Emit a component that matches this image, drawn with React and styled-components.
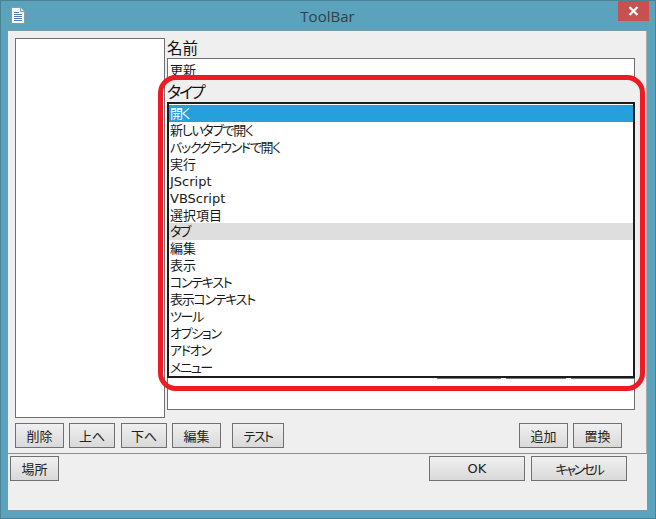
import React from 'react';
import styled, { createGlobalStyle } from 'styled-components';

const GlobalStyle = createGlobalStyle`
    html, body {
        margin: 0;
        padding: 0;
        overflow: hidden;
    }
    body {
        font-family: "DejaVu Sans", "Noto Sans CJK JP", sans-serif;
        font-feature-settings: "palt";
        color: #1a1a1a;
    }
`;

const menuItems = [
    '開く', '新しいタブで開く', 'バックグラウンドで開く', '実行', 'JScript', 'VBScript',
    '選択項目', 'タブ', '編集', '表示', 'コンテキスト', '表示コンテキスト', 'ツール',
    'オプション', 'アドオン', 'メニュー',
];

const hasKana = (text) => /[\u3040-\u30ff]/.test(text);

function DocIcon() {
    return (
        <svg width="14" height="17" viewBox="0 0 14 17">
            <path d="M0.5 0.5H9.5L13.5 4.5V16.5H0.5Z" fill="#fbfcfe" stroke="#8f98a3" />
            <path d="M9.5 0.5V4.5H13.5" fill="#dfe5ec" stroke="#8f98a3" />
            <path d="M3 5.5H8M3 7.5H11M3 9.5H11M3 11.5H11M3 13.5H11" stroke="#4f7fc0" />
        </svg>
    );
}

export default function App() {
    return (
        <Frame>
            <GlobalStyle />
            <TitleBar>
                <TitleIcon><DocIcon /></TitleIcon>
                <Title>ToolBar</Title>
                <CloseButton>
                    <svg width="11" height="10" viewBox="0 0 11 10">
                        <path d="M1.5 1L9.5 9M9.5 1L1.5 9" stroke="#fff" strokeWidth="2.2" />
                    </svg>
                </CloseButton>
            </TitleBar>
            <Client>
                <Panel>
                    <Body>
                        <ButtonList />
                        <Details>
                            <FieldLabel>名前</FieldLabel>
                            <NameInput>更新</NameInput>
                            <FieldLabel $kana>タイプ</FieldLabel>
                            <TypeBox>
                                <HiddenButtons>
                                    <HiddenButton $w={64} />
                                    <HiddenButton $w={60} />
                                    <HiddenButton $w={63} />
                                </HiddenButtons>
                                <Dropdown>
                                    {menuItems.map((item, i) => (
                                        <MenuRow key={item} $selected={i === 0} $hover={i === 7} $kana={hasKana(item)}>{item}</MenuRow>
                                    ))}
                                </Dropdown>
                            </TypeBox>
                        </Details>
                    </Body>
                    <ActionRow>
                        <Button $w={49}>削除</Button>
                        <Button $w={46}>上へ</Button>
                        <Button $w={46} $ml={1}>下へ</Button>
                        <Button $w={49}>編集</Button>
                        <Button $w={52} $ml={6} $spacing={-1.5}>テスト</Button>
                        <Spacer />
                        <Button $w={49}>追加</Button>
                        <Button $w={49}>置換</Button>
                    </ActionRow>
                </Panel>
                <FooterRow>
                    <Button $w={49}>場所</Button>
                    <Spacer />
                    <Button $w={96}>OK</Button>
                    <Button $w={96} $spacing={-2.4}>キャンセル</Button>
                </FooterRow>
            </Client>
            <Highlight />
        </Frame>
    );
}

const Frame = styled.div`
    position: relative;
    box-sizing: border-box;
    width: 656px;
    height: 519px;
    display: flex;
    flex-direction: column;
    padding: 0 7px 7px 6px;
    background: #5ba2bc;
    border: 1px solid #4a8296;
    overflow: hidden;
`;

const TitleBar = styled.div`
    position: relative;
    flex: none;
    height: 29px;
    display: flex;
    align-items: center;
    justify-content: center;
`;

const TitleIcon = styled.div`
    position: absolute;
    left: 4px;
    top: 6px;
    line-height: 0;
`;

const Title = styled.div`
    font-family: "Open Sans", sans-serif;
    font-size: 15px;
    color: #2f4248;
`;

const CloseButton = styled.div`
    position: absolute;
    right: -1px;
    top: 0;
    width: 31px;
    height: 20px;
    display: flex;
    align-items: center;
    justify-content: center;
    background: #c75050;
`;

const Client = styled.div`
    flex: 1;
    display: flex;
    flex-direction: column;
    background: #efefef;
    border: 1px solid #7f98a3;
`;

const Panel = styled.div`
    box-sizing: border-box;
    height: 423px;
    display: flex;
    flex-direction: column;
    gap: 5px;
    padding: 7px 0 5px 7px;
    border-bottom: 1px solid #8a8d90;
    border-right: 1px solid #a9acae;
`;

const Body = styled.div`
    flex: 1;
    min-height: 0;
    display: flex;
    gap: 2px;
`;

const ButtonList = styled.div`
    box-sizing: border-box;
    width: 150px;
    background: #fff;
    border: 1px solid #6f6f6f;
`;

const Details = styled.div`
    width: 468px;
    height: 372px;
    display: flex;
    flex-direction: column;
`;

const FieldLabel = styled.div`
    height: ${(p) => (p.$kana ? '22px' : '20px')};
    font-size: ${(p) => (p.$kana ? '16px' : '15.5px')};
    line-height: ${(p) => (p.$kana ? '25px' : '22px')};
    letter-spacing: ${(p) => (p.$kana ? '-2px' : '0')};
    color: #111;
    white-space: nowrap;
`;

const NameInput = styled.div`
    box-sizing: border-box;
    height: 22px;
    padding-left: 2px;
    font-size: 13px;
    line-height: 23px;
    background: #fff;
    border: 1px solid #6f6f6f;
`;

const TypeBox = styled.div`
    position: relative;
    box-sizing: border-box;
    flex: 1;
    background: #fff;
    border: 1px solid #6f6f6f;
`;

const HiddenButtons = styled.div`
    display: flex;
    justify-content: flex-end;
    gap: 5px;
    padding-top: 251px;
`;

const HiddenButton = styled.div`
    box-sizing: border-box;
    width: ${(p) => p.$w}px;
    height: 25px;
    background: #e6e6e6;
    border: 1px solid #7a7a7a;
`;

const Dropdown = styled.div`
    position: absolute;
    left: -1px;
    top: -1px;
    box-sizing: border-box;
    width: 468px;
    height: 276px;
    padding: 1px 0;
    background: #fff;
    border: 2px solid #1c1c1c;
    overflow: hidden;
`;

const MenuRow = styled.div`
    height: 16.93px;
    padding-left: 1px;
    font-size: 13px;
    line-height: 17px;
    white-space: nowrap;
    letter-spacing: ${(p) => (p.$kana ? '-1.3px' : '0')};
    color: ${(p) => (p.$selected ? '#fff' : '#1a1a1a')};
    background: ${(p) => (p.$selected ? '#26a0da' : p.$hover ? '#dedede' : 'transparent')};
`;

const ActionRow = styled.div`
    flex: none;
    display: flex;
    gap: 5px;
    padding-right: 24px;
`;

const FooterRow = styled.div`
    display: flex;
    gap: 6px;
    padding: 2px 20px 0 2px;
`;

const Spacer = styled.div`
    flex: 1;
`;

const Button = styled.div`
    box-sizing: border-box;
    flex: none;
    width: ${(p) => p.$w}px;
    height: 25px;
    margin-left: ${(p) => p.$ml || 0}px;
    display: flex;
    align-items: center;
    justify-content: center;
    font-size: 13px;
    letter-spacing: ${(p) => p.$spacing || 0}px;
    color: #222;
    white-space: nowrap;
    background: linear-gradient(#f0f0f0, #d9d9d9);
    border: 1px solid #707070;
`;

const Highlight = styled.div`
    position: absolute;
    left: 157px;
    top: 74px;
    box-sizing: border-box;
    width: 487px;
    height: 316px;
    border: 5px solid #ed1c24;
    border-radius: 18px;
    pointer-events: none;
`;
